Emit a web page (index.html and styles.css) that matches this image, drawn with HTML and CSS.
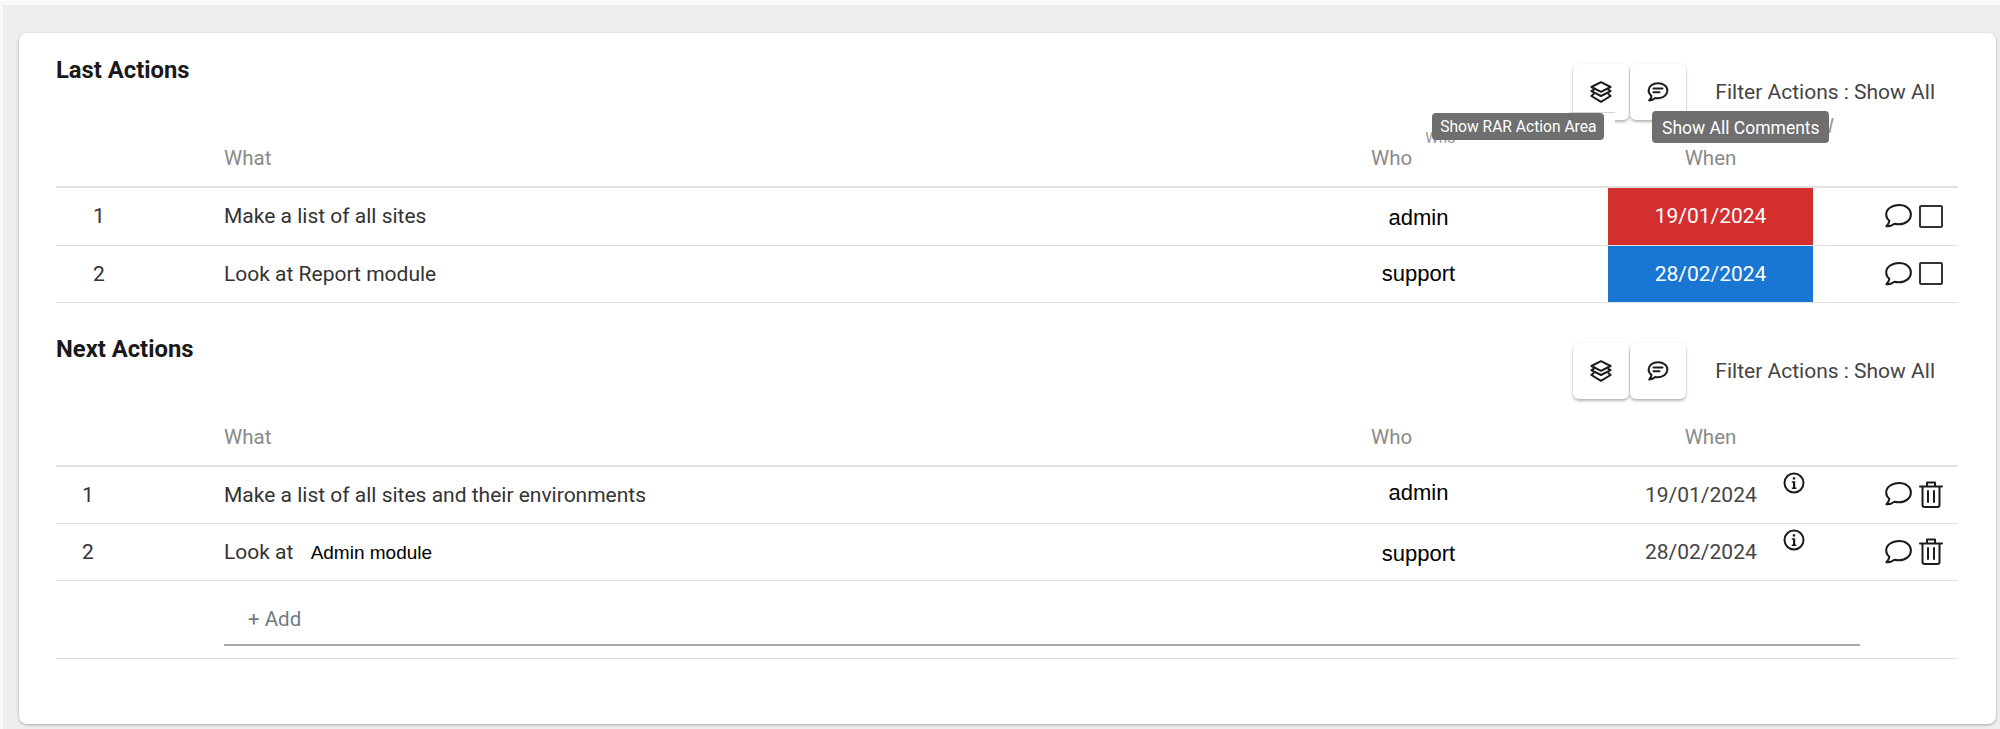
FILE: index.html
```html
<!DOCTYPE html>
<html lang="en">
<head>
  <meta charset="UTF-8">
  <title>Actions</title>
  <link rel="stylesheet" href="styles.css">
</head>
<body>
  <svg class="sprites" width="0" height="0" aria-hidden="true">
    <symbol id="i-layers" viewBox="0 0 22 22">
      <path d="M11 1.2 20.6 6 11 10.8 1.4 6Z"/>
      <path d="M3.6 8.8 1.4 10.2 11 15 20.600 10.2 18.4 8.8"/>
      <path d="M3.6 13 1.4 15 11 20.800 20.600 15 18.4 13"/>
    </symbol>
    <symbol id="i-comment" viewBox="0 0 22 20">
      <path d="M11 1.2C5.800 1.200 1.600 4.400 1.600 8.600c0 2.200 1.100 4 2.900 5.400-.2 1.500-1 3-2.300 4.400 2.400-.1 4.500-1 6-2.400.9.2 1.800.3 2.800.3 5.200 0 9.400-3.400 9.400-7.700S16.200 1.200 11 1.200Z"/>
      <path d="M6.500 6.500h9M6.500 10.200h6"/>
    </symbol>
    <symbol id="i-bubble" viewBox="0 0 28 24">
      <path d="M15 1.100C7.800 1.100 2.200 5.200 2.200 10.400c0 2.500 1.200 4.700 3.200 6.300-.2 1.900-1.200 3.600-3 5.500 3.100.2 6-.9 8.100-2.500 1.400.3 2.900.5 4.500.5 7 0 11.900-4.300 11.900-9.800S22 1.100 15 1.100Z"/>
    </symbol>
    <symbol id="i-trash" viewBox="0 0 24 27">
      <path d="M1 5.500h22M8 5.500V1.500h8v4M3.500 5.500V24a2 2 0 0 0 2 2h13a2 2 0 0 0 2-2V5.500"/>
      <path d="M9 10v11M15 10v11"/>
    </symbol>
    <symbol id="i-info" viewBox="0 0 22 22">
      <circle cx="11" cy="11" r="9.500"/>
      <path class="solid" d="M9.800 5.200h2.400v2.400H9.800ZM8.800 9.200h3.400v6.200h1.200v1.600H8.800v-1.600H10v-4.600H8.800Z"/>
    </symbol>
  </svg>

  <div class="panel">
    <div class="card">

      <section class="section">
        <div class="section-head">
          <h2>Last Actions</h2>
          <div class="toolbar">
            <span class="ghost ghost-who">Who</span>
            <span class="ghost ghost-when">W</span>
            <button class="tool"><svg class="ic-layers"><use href="#i-layers"/></svg></button>
            <button class="tool"><svg class="ic-comment"><use href="#i-comment"/></svg></button>
            <span class="filter">Filter Actions : Show All</span>
            <span class="shadow-patch"></span>
            <span class="tip tip-rar">Show RAR Action Area</span>
            <span class="tip tip-comments">Show All Comments</span>
          </div>
        </div>
        <table>
          <colgroup>
            <col class="c-num"><col class="c-gap"><col class="c-what"><col class="c-who"><col class="c-when"><col class="c-act">
          </colgroup>
          <thead>
            <tr><th></th><th></th><th>What</th><th>Who</th><th class="center">When</th><th></th></tr>
          </thead>
          <tbody>
            <tr class="row-a">
              <td class="num">1</td><td></td><td>Make a list of all sites</td>
              <td class="who low">admin</td>
              <td class="date overdue">19/01/2024</td>
              <td class="act"><svg class="ic-bubble"><use href="#i-bubble"/></svg><span class="check"></span></td>
            </tr>
            <tr class="row-b">
              <td class="num">2</td><td></td><td>Look at Report module</td>
              <td class="who">support</td>
              <td class="date upcoming">28/02/2024</td>
              <td class="act"><svg class="ic-bubble"><use href="#i-bubble"/></svg><span class="check"></span></td>
            </tr>
          </tbody>
        </table>
      </section>

      <section class="section next">
        <div class="section-head">
          <h2>Next Actions</h2>
          <div class="toolbar">
            <button class="tool"><svg class="ic-layers"><use href="#i-layers"/></svg></button>
            <button class="tool"><svg class="ic-comment"><use href="#i-comment"/></svg></button>
            <span class="filter">Filter Actions : Show All</span>
          </div>
        </div>
        <table>
          <colgroup>
            <col class="c-num"><col class="c-gap"><col class="c-what"><col class="c-who"><col class="c-when"><col class="c-act">
          </colgroup>
          <thead>
            <tr><th></th><th></th><th>What</th><th>Who</th><th class="center">When</th><th></th></tr>
          </thead>
          <tbody>
            <tr class="row-a">
              <td class="num-left">1</td><td></td><td>Make a list of all sites and their environments</td>
              <td class="who high">admin</td>
              <td><div class="date-info"><span>19/01/2024</span><svg class="ic-info"><use href="#i-info"/></svg></div></td>
              <td class="act"><svg class="ic-bubble"><use href="#i-bubble"/></svg><svg class="ic-trash"><use href="#i-trash"/></svg></td>
            </tr>
            <tr class="row-b">
              <td class="num-left">2</td><td></td><td>Look at <span class="edited">Admin module</span></td>
              <td class="who low">support</td>
              <td><div class="date-info"><span>28/02/2024</span><svg class="ic-info"><use href="#i-info"/></svg></div></td>
              <td class="act"><svg class="ic-bubble"><use href="#i-bubble"/></svg><svg class="ic-trash"><use href="#i-trash"/></svg></td>
            </tr>
            <tr class="row-add">
              <td></td><td></td>
              <td colspan="4"><div class="add">+ Add</div></td>
            </tr>
          </tbody>
        </table>
      </section>

    </div>
  </div>
</body>
</html>
```

FILE: styles.css
```css
html, body {
  margin: 0;
  height: 729px;
  overflow: hidden;
  background-color: #fafafa;
}
body {
  font-family: Roboto, Arial, sans-serif;
  color: #333;
}
.sprites { position: absolute; }
svg {
  fill: none;
  stroke: #1c1c1c;
  stroke-width: 2;
  stroke-linejoin: round;
  stroke-linecap: round;
}
.solid { fill: #1c1c1c; stroke: none; }

.panel {
  margin: 5px 0 0 3px;
  padding: 28px 4px 5px 16px;
  height: 691px;
  background-color: #eee;
}
.card {
  height: 691px;
  box-sizing: border-box;
  padding: 23px 38px 0 37px;
  background-color: #fff;
  border-radius: 8px;
  box-shadow: 0 1px 3px rgba(0,0,0,.3);
}
.next { margin-top: 32px; }

.section-head {
  display: flex;
  justify-content: space-between;
  align-items: flex-start;
  height: 64px;
}
h2 {
  margin: 0;
  font-size: 23.800px;
  line-height: 28px;
  font-weight: 700;
  color: #1a1a1a;
}
.toolbar {
  position: relative;
  display: flex;
  align-items: center;
  margin-top: 8px;
  height: 56px;
}
.tool {
  display: flex;
  align-items: center;
  justify-content: center;
  width: 56px;
  height: 56px;
  margin-right: 1px;
  padding: 0;
  border: 0;
  border-radius: 6px;
  background-color: #fff;
  box-shadow: 0 2px 3px rgba(0,0,0,.28), 0 0 2px rgba(0,0,0,.08);
}
.ic-layers { width: 22px; height: 22px; }
.ic-comment { width: 22px; height: 20px; }
.filter {
  margin-left: 28px;
  margin-right: 23px;
  font-size: 21px;
  color: #444;
}

/* tooltips hang off the first toolbar */
.tip {
  position: absolute;
  box-sizing: border-box;
  display: flex;
  align-items: center;
  justify-content: center;
  padding-top: 1px;
  color: #fff;
  background-color: #6f6f6f;
  border-radius: 4px;
  white-space: nowrap;
}
.tip-rar {
  left: -141px;
  top: 49px;
  width: 172px;
  height: 27px;
  font-size: 15.600px;
}
.tip-comments {
  left: 79px;
  top: 47px;
  width: 177px;
  height: 32px;
  font-size: 17.500px;
}
.shadow-patch {
  position: absolute;
  left: -4px;
  top: 48px;
  width: 46px;
  height: 14px;
  background-color: #fff;
  border-top: 1px solid #d5d5d5;
}
.ghost {
  position: absolute;
  font-size: 15px;
  color: #999;
}
.ghost-who { left: -148px; top: 65px; }
.ghost-when { left: 243px; top: 50px; font-size: 20px; }

table {
  width: 100%;
  table-layout: fixed;
  border-collapse: collapse;
}
.c-num { width: 86px; }
.c-gap { width: 70px; }
.c-what { width: 1143px; }
.c-who { width: 253px; }
.c-when { width: 205px; }
.c-act { width: 145px; }

th, td { box-sizing: border-box; }
th {
  height: 67px;
  padding: 0 0 16px 12px;
  vertical-align: bottom;
  text-align: left;
  font-size: 20.500px;
  line-height: 24px;
  font-weight: 400;
  color: #8a8a8a;
  border-bottom: 2px solid #e0e0e0;
}
th:nth-child(4) { padding-left: 16px; }
th.center { padding-left: 0; text-align: center; }
td {
  padding: 0 0 0 12px;
  font-size: 21px;
  border-bottom: 1px solid #e0e0e0;
}
.row-a td { height: 58px; }
.row-b td { height: 57px; }
.num { padding-left: 0; text-align: center; }
.num-left { padding-left: 26px; }
.who {
  padding: 0 126px 0 0;
  text-align: center;
  font-family: "Liberation Sans", Arial, sans-serif;
  font-size: 22px;
  color: #000;
}
.who.low { padding-top: 4px; }
.who.high { padding-bottom: 3px; }
.edited {
  margin-left: 12px;
  font-family: "Liberation Sans", Arial, sans-serif;
  font-size: 19px;
  color: #000;
}
.date {
  padding: 0;
  text-align: center;
  color: #fff;
}
.overdue { background-color: #d32f2f; }
.upcoming { background-color: #1976d2; }
.date-info {
  display: flex;
  align-items: center;
  margin-left: 25px;
  gap: 26px;
  color: #444;
}
.ic-info {
  width: 22px;
  height: 22px;
  margin-bottom: 24px;
}
.act { padding: 0 0 1px 71px; }
.act svg, .check {
  display: inline-block;
  vertical-align: middle;
}
.ic-bubble { width: 28px; height: 24px; }
.ic-trash { width: 24px; height: 27px; margin-left: 7px; }
.check {
  box-sizing: border-box;
  width: 24px;
  height: 23px;
  margin-left: 7px;
  border: 2.500px solid #333;
  border-radius: 2px;
}
.row-add td { height: 78px; vertical-align: top; }
.row-add td:nth-child(3) { padding: 0 98px 0 12px; }
.add {
  box-sizing: border-box;
  height: 65px;
  padding: 26px 0 0 24px;
  font-size: 20.500px;
  line-height: 24px;
  color: #6f7b85;
  border-bottom: 2px solid #aaa;
}
```
